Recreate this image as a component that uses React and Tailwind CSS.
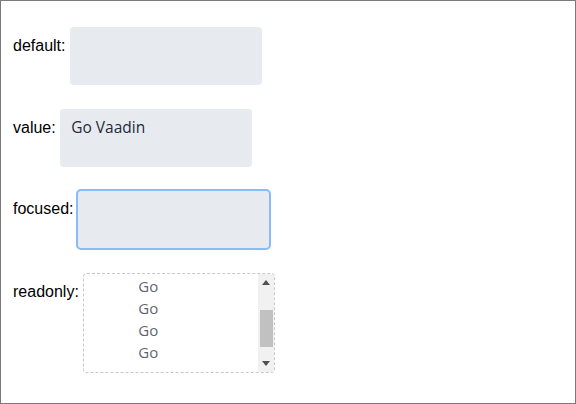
import React from 'react';

const labelCls = "text-[16px] leading-[18px] text-black pt-[10px] shrink-0";
const areaFont = { fontFamily: '"Open Sans", "Noto Sans", sans-serif' };

const ScrollArrow = ({ down }) => (
    <svg width="8" height="5" viewBox="0 0 8 5" className="block">
        <path d={down ? "M0 0 L8 0 L4 5 Z" : "M4 0 L8 5 L0 5 Z"} fill="#505050" />
    </svg>
);

const App = () => {
    const lines = ['Go', 'Go', 'Go', 'Go'];

    return (
        <div className="w-[576px] h-[404px] border border-[#7a7a7a] bg-white pl-[12px] pt-[26px] font-['Liberation_Sans',Arial,sans-serif]">
            <div className="flex items-start gap-[4.5px]">
                <span className={labelCls}>default:</span>
                <div className="w-[192px] h-[58px] rounded-[4px] bg-[#e7eaee]" />
            </div>

            <div className="flex items-start gap-[4.5px] mt-[24px]">
                <span className={labelCls}>value:</span>
                <div
                    className="w-[192px] h-[58px] rounded-[4px] bg-[#e7eaee] pl-[11px] pt-[7px] text-[15.5px] font-medium leading-[22px] text-[#1f2b3c]"
                    style={areaFont}
                >
                    Go Vaadin
                </div>
            </div>

            <div className="flex items-start gap-[3px] mt-[22px]">
                <span className={`${labelCls} pt-[11px]`}>focused:</span>
                <div className="w-[195px] h-[61px] rounded-[5px] bg-[#e7eaee] border-2 border-[#8abaf9]" />
            </div>

            <div className="flex items-start gap-[4.5px] mt-[23px]">
                <span className={labelCls}>readonly:</span>
                <div className="w-[192px] h-[100px] rounded-[4px] border border-dashed border-[#c4c9d0] flex overflow-hidden">
                    <div
                        className="flex-1 pl-[54px] pt-[1px] text-[15px] leading-[22px] text-[#5f6670] overflow-hidden"
                        style={areaFont}
                    >
                        {lines.map((l, i) => (
                            <div key={i}>{l}</div>
                        ))}
                    </div>
                    <div className="w-[16px] bg-[#f1f1f1] flex flex-col items-center justify-between py-[6px] relative">
                        <ScrollArrow />
                        <div className="absolute left-[2px] right-[1px] top-[36px] h-[37px] bg-[#c1c1c1]" />
                        <ScrollArrow down />
                    </div>
                </div>
            </div>
        </div>
    );
};

export default App;
